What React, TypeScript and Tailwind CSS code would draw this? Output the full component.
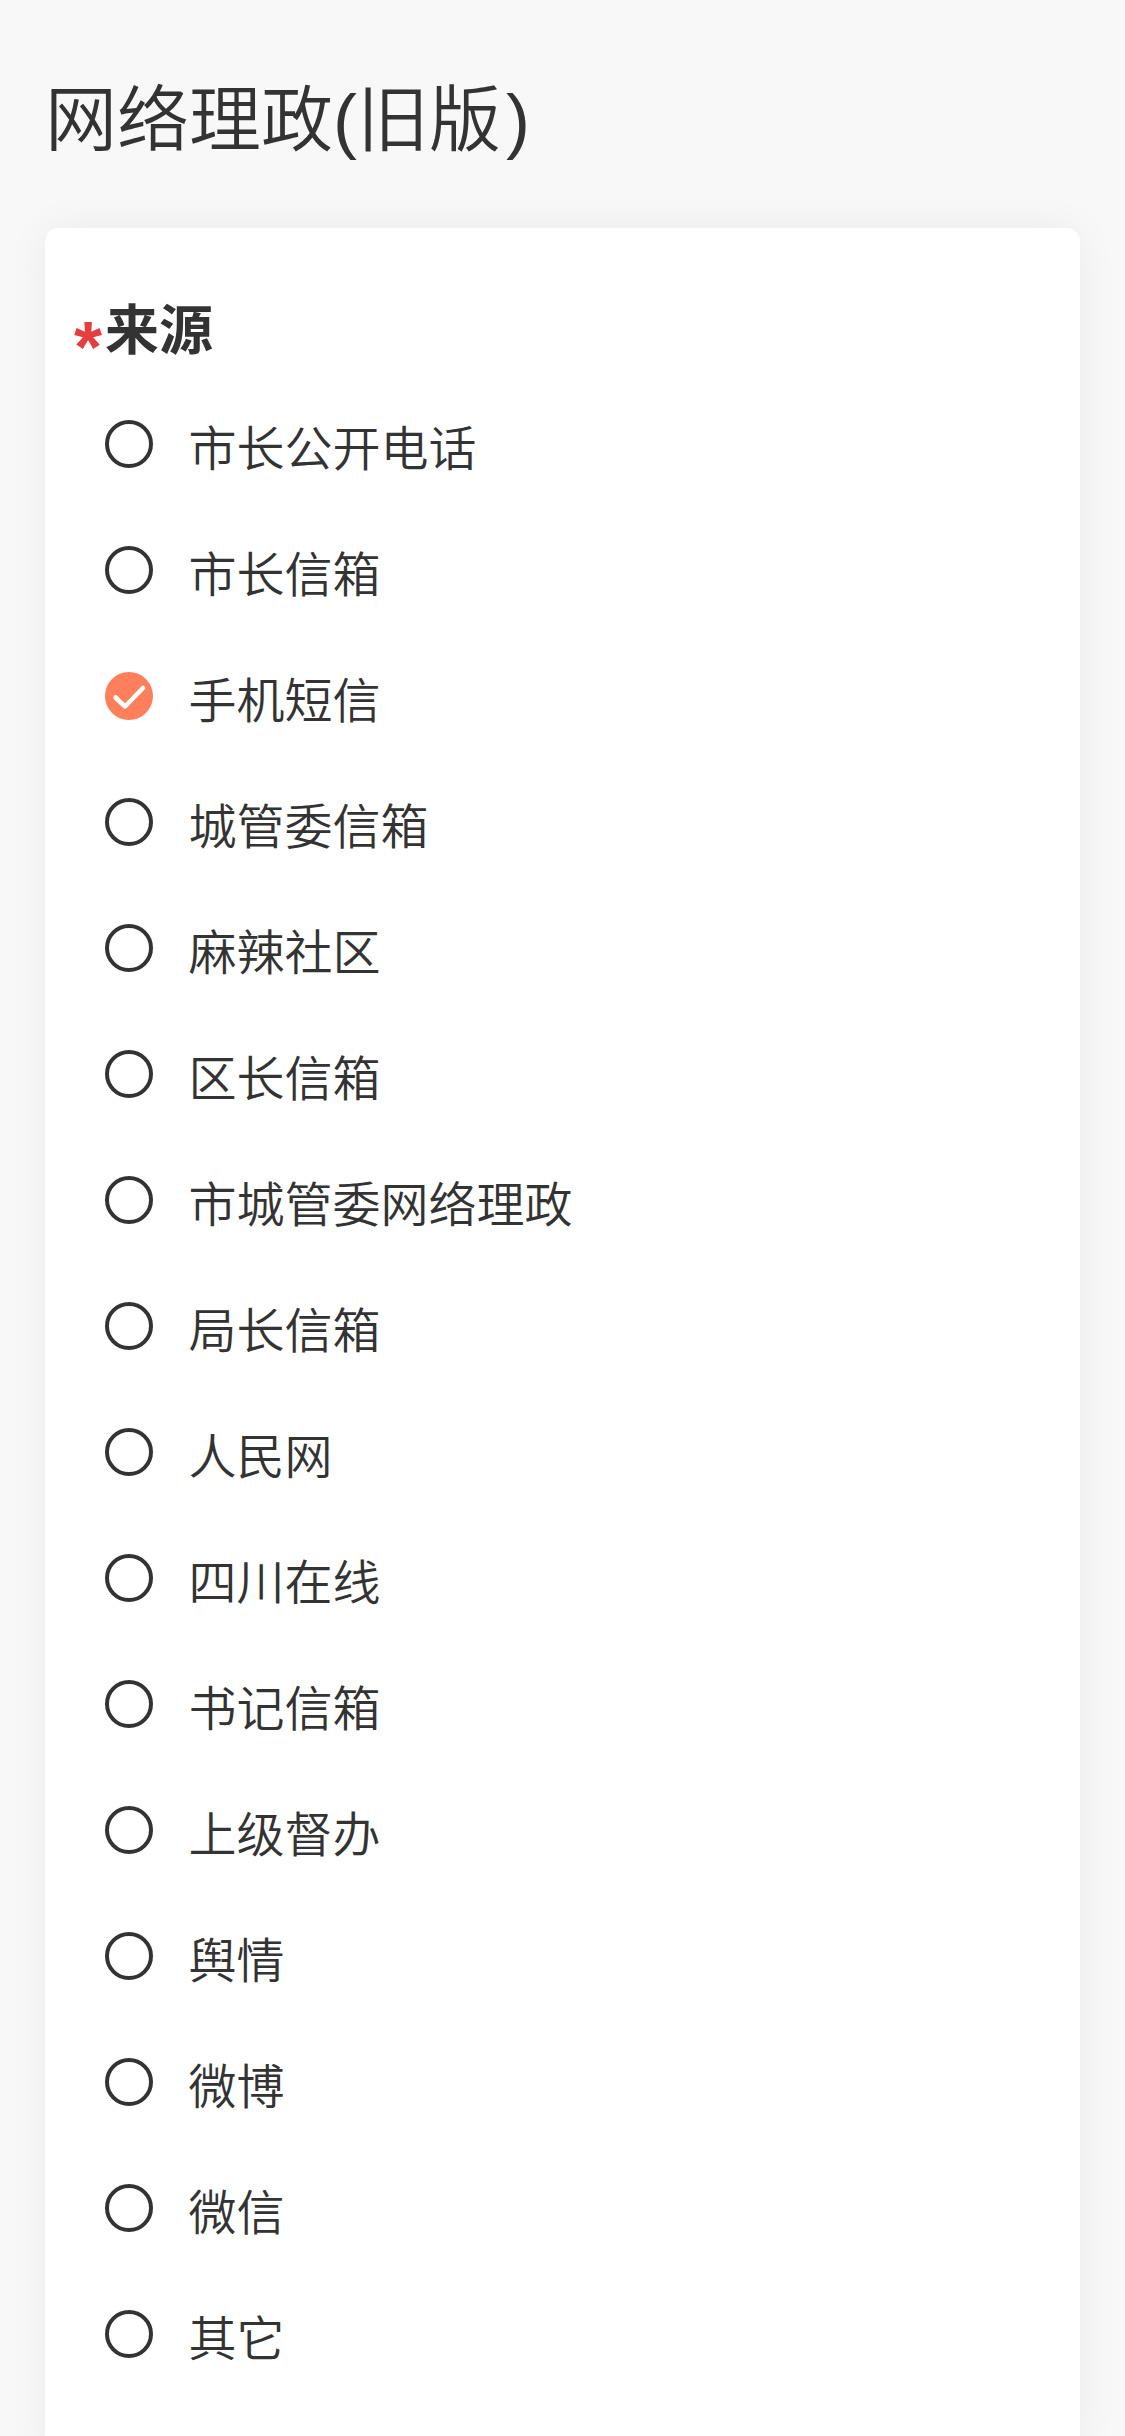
import React from "react";

const options = [
  "市长公开电话",
  "市长信箱",
  "手机短信",
  "城管委信箱",
  "麻辣社区",
  "区长信箱",
  "市城管委网络理政",
  "局长信箱",
  "人民网",
  "四川在线",
  "书记信箱",
  "上级督办",
  "舆情",
  "微博",
  "微信",
  "其它",
];

const fontStack = "font-['Liberation_Sans','Noto_Sans_CJK_SC',sans-serif]";

const RadioMark = ({ checked }: { checked: boolean }) => {
  if (checked) {
    return (
      <svg viewBox="0 0 48 48" className="h-12 w-12 shrink-0">
        <circle cx="24" cy="24" r="24" fill="#ff7f5c" />
        <path
          d="M10.5 25.5 L20 34.5 L38 16"
          fill="none"
          stroke="#fff"
          strokeWidth="4.5"
          strokeLinecap="round"
          strokeLinejoin="round"
        />
      </svg>
    );
  }
  return <div className="h-12 w-12 shrink-0 rounded-full border-[4.5px] border-[#333]" />;
};

export default function App() {
  return (
    <div className={`h-[2436px] overflow-hidden bg-[#f8f8f8] text-[#333] ${fontStack}`}>
      {/* Title */}
      <div className="pt-[70px] pl-[45px] text-[72px] leading-[100px] font-[350]">
        网络理政(旧版<span className="ml-[5px]">)</span>
      </div>

      {/* Card */}
      <div className="mx-[45px] mt-[58px] rounded-[14px] bg-white pt-[57px] pb-10 shadow-[0_0_40px_rgba(0,0,0,0.06)]">
        <div className="flex h-[92px] items-start pl-[29px] text-[54px] leading-[76px] font-bold">
          <span className="mt-[26px] w-[31px] text-[72px] leading-none text-[#e53e3e]">*</span>
          <span className="mt-[8px]">来源</span>
        </div>
        <div className="mt-[21px] flex flex-col">
          {options.map((label, i) => (
            <div key={label} className="flex h-[126px] items-start pl-[60px]">
              <div className="mt-[22px]">
                <RadioMark checked={i === 2} />
              </div>
              <span className="mt-[17px] ml-[35.5px] text-[48px] leading-[70px] font-[350]">{label}</span>
            </div>
          ))}
        </div>
      </div>
    </div>
  );
}
